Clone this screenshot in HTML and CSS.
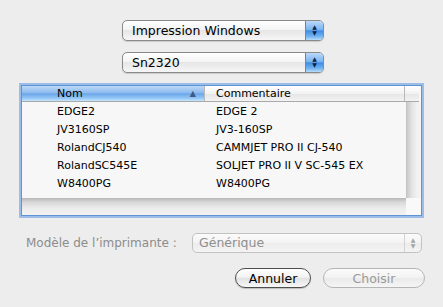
FILE: index.html
```html
<!DOCTYPE html>
<html lang="fr">
<head>
  <meta charset="UTF-8">
  <title>Imprimante</title>
  <link rel="stylesheet" href="styles.css">
</head>
<body>
  <div class="sheet">
    <div class="popup">
      <span class="popup-label">Impression Windows</span>
      <span class="popup-arrows">&#9650;<br>&#9660;</span>
    </div>
    <div class="popup">
      <span class="popup-label">Sn2320</span>
      <span class="popup-arrows">&#9650;<br>&#9660;</span>
    </div>

    <div class="list-frame">
      <div class="list-main">
        <div class="list-body">
          <div class="list-rows">
            <div class="row head">
              <div class="cell name sorted">Nom <span class="sort">&#9650;</span></div>
              <div class="cell comment">Commentaire</div>
              <div class="cell corner"></div>
            </div>
            <div class="row"><div class="cell name">EDGE2</div><div class="cell comment">EDGE 2</div></div>
            <div class="row"><div class="cell name">JV3160SP</div><div class="cell comment">JV3-160SP</div></div>
            <div class="row"><div class="cell name">RolandCJ540</div><div class="cell comment">CAMMJET PRO II CJ-540</div></div>
            <div class="row"><div class="cell name">RolandSC545E</div><div class="cell comment">SOLJET PRO II V SC-545 EX</div></div>
            <div class="row"><div class="cell name">W8400PG</div><div class="cell comment">W8400PG</div></div>
          </div>
          <div class="vscroll"></div>
        </div>
        <div class="list-foot">
          <div class="hscroll"></div>
          <div class="foot-corner"></div>
        </div>
      </div>
    </div>

    <div class="model">
      <span class="model-label">Modèle de l’imprimante :</span>
      <div class="popup disabled">
        <span class="popup-label">Générique</span>
        <span class="popup-arrows">&#9650;<br>&#9660;</span>
      </div>
    </div>

    <div class="actions">
      <button class="btn">Annuler</button>
      <button class="btn disabled">Choisir</button>
    </div>
  </div>
</body>
</html>
```

FILE: styles.css
```css
html, body { margin: 0; padding: 0; }
body {
  background: #ededed;
  font-family: "DejaVu Sans", "Noto Sans", sans-serif;
  color: #000;
  width: 443px;
  height: 307px;
  overflow: hidden;
}
.sheet {
  display: flex;
  flex-direction: column;
  padding-top: 20px;
}

/* aqua popup buttons */
.popup {
  display: flex;
  align-items: stretch;
  width: 202px;
  height: 21px;
  box-sizing: border-box;
  margin-left: 122px;
  border: 1px solid #8a8a8a;
  border-radius: 5px;
  background: linear-gradient(#ffffff 0%, #f4f4f4 45%, #e6e6e6 50%, #f6f6f6 100%);
  box-shadow: 0 1px 1px rgba(0, 0, 0, 0.15);
  overflow: hidden;
}
.popup + .popup { margin-top: 11px; }
.popup-label {
  flex: 1;
  font-size: 12.5px;
  line-height: 19px;
  padding-left: 9px;
  white-space: nowrap;
}
.popup-arrows {
  width: 18px;
  font-size: 6px;
  line-height: 6px;
  text-align: center;
  padding-top: 3px;
  box-sizing: border-box;
  color: #10233d;
  border-left: 1px solid #5f86bd;
  background: linear-gradient(#b9d9fa 0%, #7cb5f0 45%, #3f8de4 52%, #6fb1f2 80%, #b7dcfb 100%);
}

/* list */
.list-frame {
  margin: 12px 0 0 21px;
  width: 399px;
  height: 129px;
  border: 1px solid #5e93d6;
  box-shadow: 0 0 0 2px rgba(128, 172, 230, 0.75);
  background: #f7f7f7;
}
.list-main { display: flex; flex-direction: column; height: 100%; }
.list-body { display: flex; position: relative; height: 112px; }
.list-rows { width: 397px; }
.row {
  display: flex;
  height: 18px;
  font-size: 11px;
  line-height: 20px;
}
.cell { white-space: nowrap; box-sizing: border-box; }
.name { width: 182px; padding-left: 35px; }
.comment { width: 200px; padding-left: 12px; }
.corner { width: 15px; }
.row.head {
  height: 16px;
  line-height: 16px;
  background: linear-gradient(#ffffff 0%, #f2f2f2 50%, #e6e6e6 55%, #f3f3f3 100%);
  border-bottom: 1px solid #a9a9a9;
  box-sizing: border-box;
}
.head .comment { border-left: 1px solid #b9b9b9; padding-left: 11px; }
.head .corner { border-left: 1px solid #b9b9b9; }
.head .sorted {
  position: relative;
  background: linear-gradient(#bcd8f6 0%, #8ebbef 45%, #6aa6ea 52%, #9ccbf7 85%, #c7e6fd 100%);
}
.sort {
  position: absolute;
  right: 8px;
  top: 0;
  font-size: 8px;
  color: #3c5a82;
}
.vscroll {
  position: absolute;
  right: 0;
  top: 16px;
  width: 15px;
  height: 96px;
  background: linear-gradient(90deg, #c9c9c9 0%, #e4e4e4 35%, #f1f1f1 70%, #f4f4f4 100%);
  border-left: 1px solid #c4c4c4;
  box-sizing: border-box;
}
.list-foot { display: flex; flex: 1; }
.hscroll {
  flex: 1;
  background: linear-gradient(#b7b7b7 0%, #d8d8d8 25%, #ececec 60%, #f2f2f2 100%);
}
.foot-corner { width: 15px; background: #f9f9f9; }

/* printer model */
.model {
  display: flex;
  align-items: center;
  margin-top: 17px;
  padding-left: 26px;
}
.model-label {
  font-size: 12px;
  color: #8c8c8c;
  width: 166px;
  white-space: nowrap;
}
.model .popup {
  margin-left: 0;
  width: 230px;
  height: 20px;
}
.popup.disabled {
  border-color: #c2c2c2;
  box-shadow: none;
  background: linear-gradient(#fbfbfb 0%, #f3f3f3 50%, #ececec 52%, #f4f4f4 100%);
}
.popup.disabled .popup-label { color: #8e8e8e; line-height: 18px; padding-left: 6px; }
.popup.disabled .popup-arrows {
  background: none;
  border-left: 1px solid #d3d3d3;
  color: #a5a5a5;
  width: 17px;
}

/* buttons */
.actions {
  display: flex;
  justify-content: flex-end;
  gap: 12px;
  padding-right: 18px;
  margin-top: 15px;
}
.btn {
  font-family: inherit;
  font-size: 12.5px;
  height: 20px;
  padding: 0;
  border: 1px solid #4d4d4d;
  border-radius: 10px;
  background: linear-gradient(#ffffff 0%, #f3f3f3 45%, #e2e2e2 52%, #f7f7f7 100%);
  color: #000;
  width: 76px;
  box-shadow: 0 1px 1px rgba(0, 0, 0, 0.2);
}
.btn.disabled {
  width: 102px;
  border-color: #b5b5b5;
  color: #9a9a9a;
  box-shadow: none;
  background: linear-gradient(#fbfbfb 0%, #f2f2f2 50%, #eaeaea 52%, #f5f5f5 100%);
}
```
